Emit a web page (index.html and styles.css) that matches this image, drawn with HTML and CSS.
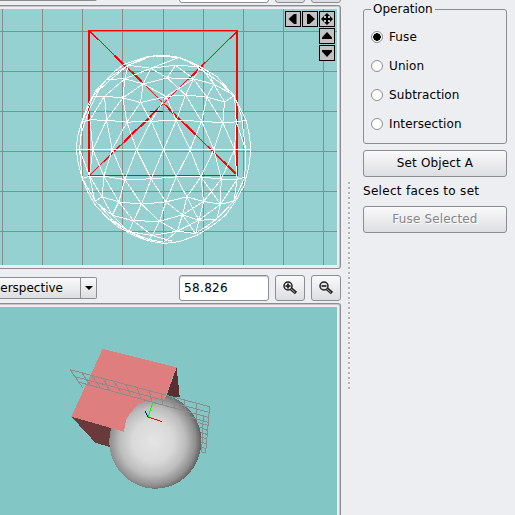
FILE: index.html
```
<!DOCTYPE html>
<html lang="en">
<head>
<meta charset="utf-8">
<title>Boolean operations</title>
<link rel="stylesheet" href="styles.css">
</head>
<body>
<main class="window">
<section class="views">
<div class="toolbar clipped"><div class="combo"></div><div class="field"></div><div class="tool"></div><div class="tool"></div></div>
<div class="frame top-view">
<svg class="scene" width="337" height="256" viewBox="0 9 337 256" shape-rendering="crispEdges">
<rect y="9" width="337" height="256" fill="#96d1d1"/>
<path class="grid" d="M2.5 9v256M42.5 9v256M82.5 9v256M122.5 9v256M163.5 9v256M203.5 9v256M243.5 9v256M283.5 9v256M323.5 9v256M0 31.5h337M0 71.5h337M0 111.5h337M0 151.5h337M0 191.5h337M0 231.5h337"/>
<g class="red"><path d="M89 30.5H238M89 175.5H238M89.500 31L237.500 175.500M237.500 31L89.500 175.500"/><path class="thick" d="M89 30V176M237 30V176M115 56L142 82M169 109L197 136M152 115L124 142M202 66L192 76M224 162L236 174"/></g>
<g class="mesh" transform="translate(72.2 50.2) scale(.33333)">
<path d="M12 298H536M30 215L53 209 103 210 164 216 237 213 312 211 388 213 452 218 492 215 522 210M49 160L63 138 97 138 152 143 205 157 282 139 340 134 404 141 457 155 487 136M104 87L158 86 213 101 285 83 364 86 425 102M168 45L236 54 310 45 385 50 435 80M192 30L245 17 320 22 385 50"/>
<path d="M12 298L16 260 30 210 49 160 72 120 104 87 125 65 155 43 192 30 222 20 275 15 320 21 365 39 410 65 435 80 480 130 502 170 522 210 532 257 536 298M22 298L28 245 53 175 80 120 125 80 168 45 222 25M350 35L398 66 445 98 490 145 508 200 520 298"/>
<path d="M22 298L30 215 63 138 104 87 168 45 222 20M62 298L53 209 97 138 158 86 236 54 320 22M62 298L103 210 152 143 213 101M120 298L164 216 205 157M193 298L237 213 282 139 364 86 385 50M274 298L312 211 340 134 364 86M354 298L388 213 404 141 425 102 410 65M425 298L452 218 457 155M487 298L492 215 487 136M520 298L492 215"/>
<path d="M103 210L120 298M97 138L103 210M164 216L193 298M237 213L274 298M312 211L354 298M388 213L425 298M452 218L487 298M152 143L164 216M205 157L237 213M282 139L312 211M340 134L388 213M404 141L452 218M152 143L158 86 168 45M236 54L213 101 205 157M213 101L282 139M158 86L213 101M236 54L285 83 340 134M310 45L285 83M310 45L364 86 404 141M385 50L425 102 457 155M425 102L487 136"/>
</g>
<g class="mesh" transform="translate(72.2 146.2) scale(.33333)">
<path d="M12 10L18 50 30 97 48 140 68 175 105 215 135 240 185 268 225 283 275 292 322 286 375 267 425 235 460 207 490 165 515 120 530 60 536 10M22 10L30 97 70 165 120 220 170 256 230 280 275 288M400 245L445 207 485 165 518 93 520 10"/>
<path d="M30 97L52 90 95 90 158 100 237 98 312 92 386 92 447 99 495 99 520 93M68 165L90 152 140 167 208 174 281 167 344 152 394 166 445 174 485 165M70 167L120 207 184 224 262 225 331 206 380 222 433 220M105 215L170 256 240 268 315 255 370 262 433 220"/>
<path d="M22 10L52 90 90 152M62 10L95 90 140 167 184 224 240 268 300 285M120 10L158 100 208 174 262 225 315 255M193 10L237 98 281 167 331 206 370 262M274 10L312 92 344 152 380 222M354 10L386 92 445 174M425 10L447 99M487 10L495 99 485 165"/>
<path d="M62 10L52 90 68 165M120 10L95 90 90 152 120 207 170 256M193 10L158 100 140 167 120 207M274 10L237 98 208 174 184 224 170 256 225 283M354 10L312 92 281 167 262 225 240 268 225 283M425 10L386 92 344 152 331 206 315 255 275 288M487 10L447 99 445 174 433 220M386 92L394 166 380 222 370 262M447 99L394 166 331 206M495 99L445 174 380 222 315 255"/>
</g>
<path d="M150 111.500H163" stroke="#00f"/><path d="M163.500 99V111" stroke="#0f0"/>
</svg>
<div class="nav">
<span><svg viewBox="0 0 14 14"><path d="M10.500 2v10H8L2.500 7 8 2z"/></svg></span>
<span><svg viewBox="0 0 14 14"><path d="M4 2v10h2.500l5.500-5-5.500-5z"/></svg></span>
<span><svg viewBox="0 0 14 14"><path d="M7 1l3 3H8v2h2V4l3 3-3 3V8H8v2h2l-3 3-3-3h2V8H4v2L1 7l3-3v2h2V4H4z"/></svg></span>
<span class="up"><svg viewBox="0 0 14 14"><path d="M2 10h10V8.500L7 3 2 8.500z"/></svg></span>
<span class="down"><svg viewBox="0 0 14 14"><path d="M2 4h10v1.500l-5 5.500-5-5.500z"/></svg></span>
</div>
</div>
<div class="toolbar"><div class="combo"><span>erspective</span><i></i></div><div class="field">58.826</div>
<div class="tool"><svg width="16" height="16" viewBox="0 0 16 16"><path d="M8 8l6 5" stroke="#222" stroke-width="3.500"/><path d="M9 9l4 3.500" stroke="#aaa"/><circle cx="6" cy="6" r="4" fill="#e2e3e5" stroke="#222" stroke-width="1.500"/><path d="M3.500 6h5M6 3.500v5" stroke="#111" stroke-width="1.500"/></svg></div>
<div class="tool"><svg width="16" height="16" viewBox="0 0 16 16"><path d="M8 8l6 5" stroke="#222" stroke-width="3.500"/><path d="M9 9l4 3.500" stroke="#aaa"/><circle cx="6" cy="6" r="4" fill="#e2e3e5" stroke="#222" stroke-width="1.500"/><path d="M3.500 6h5" stroke="#111" stroke-width="1.500"/></svg></div></div>
<div class="frame bottom-view">
<svg class="scene" width="337" height="208" viewBox="0 307 337 208" shape-rendering="crispEdges">
<defs><radialGradient id="ball" cx=".47" cy=".5" r=".55"><stop offset="0" stop-color="#e5e5e5"/><stop offset=".4" stop-color="#d9d9d9"/><stop offset=".65" stop-color="#bdbdbd"/><stop offset=".85" stop-color="#8e8e8e"/><stop offset="1" stop-color="#505050"/></radialGradient></defs>
<rect y="307" width="337" height="208" fill="#82c6c6"/>
<g transform="translate(60 335) scale(.33333)">
<path d="M34 245L191 290 200 343 148 336 106 323z" fill="#673b3b"/><path d="M350 97L359 185 313 200z" fill="#573131"/>
<ellipse cx="286" cy="319" rx="138" ry="142" fill="url(#ball)"/>
<path d="M128 42L350 97 313 195 288 193 270 199 235 205 200 249 191 290 34 245z" fill="#de7e7e"/>
<g class="plane"><path d="M30 104L449 215M45 125L447 232M58 142L445 247M30 104L68 158M65 113L90 150M97 122L120 157M130 130L148 165M163 140L182 172M198 149L212 181M232 158L242 190M268 168L275 199M304 178L308 210M338 187L344 223M373 196L377 242M410 205V254M449 215L437 352M377 242L444 262M413 262L443 271M418 276L442 286M422 291L441 299M424 306L440 312M424 322L439 326M424 337L438 341M422 350L437 353M430 240L425 350"/></g>
<path class="axis" d="M264 246L306 260" stroke="#f00"/><path class="axis" d="M264 246L279 203" stroke="#0f0"/><path class="axis" d="M264 246L256 228" stroke="#00c"/>
</g></svg>
</div>
</section>
<div class="splitter"></div>
<aside class="panel">
<fieldset><legend>Operation</legend>
<div class="radio on"><i></i>Fuse</div><div class="radio"><i></i>Union</div><div class="radio"><i></i>Subtraction</div><div class="radio"><i></i>Intersection</div>
</fieldset>
<div class="button">Set Object A</div>
<p>Select faces to set</p>
<div class="button disabled">Fuse Selected</div>
</aside>
</main>
</body>
</html>
```
FILE: styles.css
```
* { box-sizing: border-box; }
body { margin: 0; background: #edeef2; color: #000; font: 12px/16px "DejaVu Sans", sans-serif; overflow: hidden; }
svg { display: block; }
.window { display: flex; width: 515px; height: 515px; overflow: hidden; }
.views { width: 341px; flex: none; }
.toolbar { display: flex; align-items: center; height: 34px; padding-top: 4px; }
.toolbar.clipped { height: 5px; padding: 0; align-items: flex-end; overflow: hidden; padding-bottom: 2px; }
.clipped .combo { margin-bottom: 2px; }
.combo { display: flex; justify-content: flex-end; align-items: stretch; width: 97px; height: 22px; margin-right: 82px; border: 1px solid #8c8d90; border-left: 0; border-radius: 0 2px 2px 0; background: linear-gradient(#fafafb, #dddee1); line-height: 20px; flex: none; }
.combo span { margin-right: 17px; }
.combo i { display: grid; place-items: center; width: 16px; border-left: 1px solid #8c8d90; flex: none; }
.combo i::after { content: ""; border: 4px solid transparent; border-top-color: #000; border-bottom: 0; }
.field { width: 90px; height: 26px; margin-right: 6px; padding: 0 4px; border: 1px solid #8c8d90; border-radius: 3px; background: #fff; line-height: 24px; letter-spacing: .35px; box-shadow: inset 0 1px #ccc; flex: none; }
.tool { display: grid; place-items: center; width: 30px; height: 26px; margin-right: 6px; border: 1px solid #8c8d90; border-radius: 3px; background: linear-gradient(#fafafb, #dddee1); flex: none; }
.tool:last-child { margin-right: 0; }
.frame { position: relative; width: 341px; border: 1px solid #8c8d90; border-left: 0; border-radius: 0 3px 3px 0; padding-top: 3px; box-shadow: inset 0 1px #c5c6c9, inset -1px 0 #c5c6c9; }
.top-view { height: 264px; }
.bottom-view { height: 220px; }
.grid { fill: none; stroke: #8b8b8b; }
.red { fill: none; stroke: #f00; }
.thick { stroke-width: 2; }
.mesh path { fill: none; stroke: #fff; vector-effect: non-scaling-stroke; }
.plane path { fill: none; stroke: #8b8b8b; vector-effect: non-scaling-stroke; }
.axis { fill: none; stroke-width: 3; }
.nav { position: absolute; left: 285px; top: 5px; display: grid; grid-template-columns: repeat(3, 16px); gap: 1px; }
.nav span { height: 16px; border: 1px solid #000; background: #c3c3c3; }
.nav .up, .nav .down { grid-column: 3; }
.splitter { width: 3px; height: 209px; margin: 182px 12px 0 7px; background: radial-gradient(circle at 1px 1px, #b2b3b6 1px, #fff 1.2px, transparent 2px) 0 0 / 3px 5px repeat-y; }
.panel { width: 144px; padding-top: 1px; }
fieldset { height: 143px; margin: 0; padding: 11px 7px 0; border: 1px solid #8c8d90; border-radius: 3px; min-width: 0; }
legend { margin-left: 0; padding: 0 2px; }
.radio { display: flex; align-items: center; height: 17px; margin-bottom: 12px; letter-spacing: .1px; }
.radio i { width: 12px; height: 12px; margin: 1px 6px 0 0; border: 1px solid #8c8d90; border-radius: 50%; background: #fff; }
.on i { background: radial-gradient(circle, #000 3.5px, #fff 4px); }
.button { height: 27px; margin-top: 6px; border: 1px solid #8c8d90; border-radius: 3px; background: linear-gradient(#fafafb, #dddee1); text-align: center; line-height: 25px; letter-spacing: .15px; }
.disabled { color: #85868a; text-shadow: 1px 1px #fff; }
p { margin: 6px 0 7px; letter-spacing: .3px; }
```
